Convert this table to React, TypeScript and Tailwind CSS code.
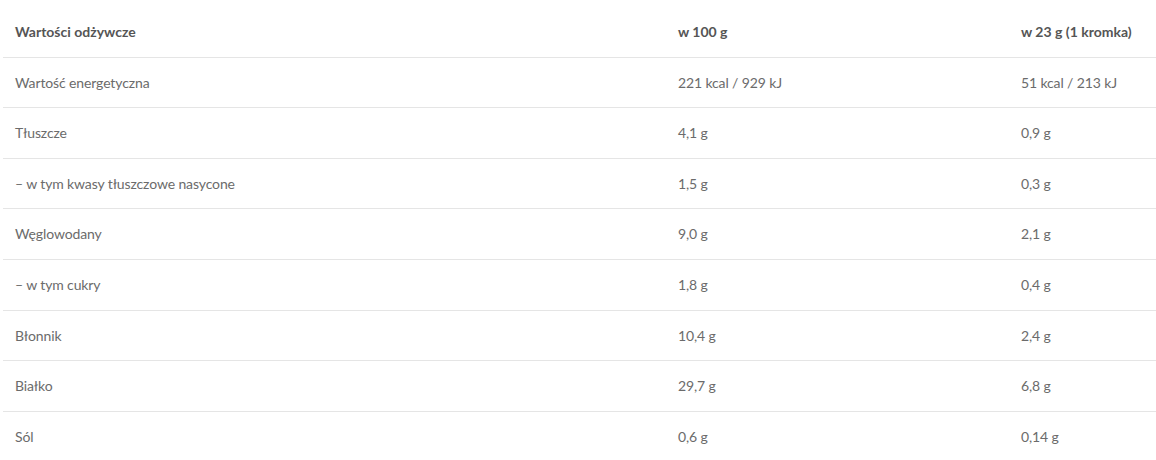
const rows: [string, string, string][] = [
  ['Wartość energetyczna', '221 kcal / 929 kJ', '51 kcal / 213 kJ'],
  ['Tłuszcze', '4,1 g', '0,9 g'],
  ['– w tym kwasy tłuszczowe nasycone', '1,5 g', '0,3 g'],
  ['Węglowodany', '9,0 g', '2,1 g'],
  ['– w tym cukry', '1,8 g', '0,4 g'],
  ['Błonnik', '10,4 g', '2,4 g'],
  ['Białko', '29,7 g', '6,8 g'],
  ['Sól', '0,6 g', '0,14 g'],
];

export default function App() {
  return (
    <div className="w-[1156px] h-[460px] overflow-hidden bg-white pl-[3px] pt-[7px] font-['Lato',sans-serif]">
      <table className="w-[1153px] border-collapse text-[14px] table-fixed">
        <colgroup>
          <col className="w-[663px]" />
          <col className="w-[343px]" />
          <col />
        </colgroup>
        <thead>
          <tr className="border-b border-[#e5e5e5]">
            <th className="text-left font-bold text-[#555] px-3 py-4 leading-[17.6px]">Wartości odżywcze</th>
            <th className="text-left font-bold text-[#555] px-3 py-4 leading-[17.6px]">w 100 g</th>
            <th className="text-left font-bold text-[#555] px-3 py-4 leading-[17.6px]">w 23 g (1 kromka)</th>
          </tr>
        </thead>
        <tbody>
          {rows.map(([name, a, b]) => (
            <tr key={name} className="border-b border-[#e5e5e5]">
              <td className="text-[#6b6b6b] tracking-[-0.12px] px-3 py-4 leading-[17.6px]">{name}</td>
              <td className="text-[#6b6b6b] tracking-[-0.12px] px-3 py-4 leading-[17.6px]">{a}</td>
              <td className="text-[#6b6b6b] tracking-[-0.12px] px-3 py-4 leading-[17.6px]">{b}</td>
            </tr>
          ))}
        </tbody>
      </table>
    </div>
  );
}
